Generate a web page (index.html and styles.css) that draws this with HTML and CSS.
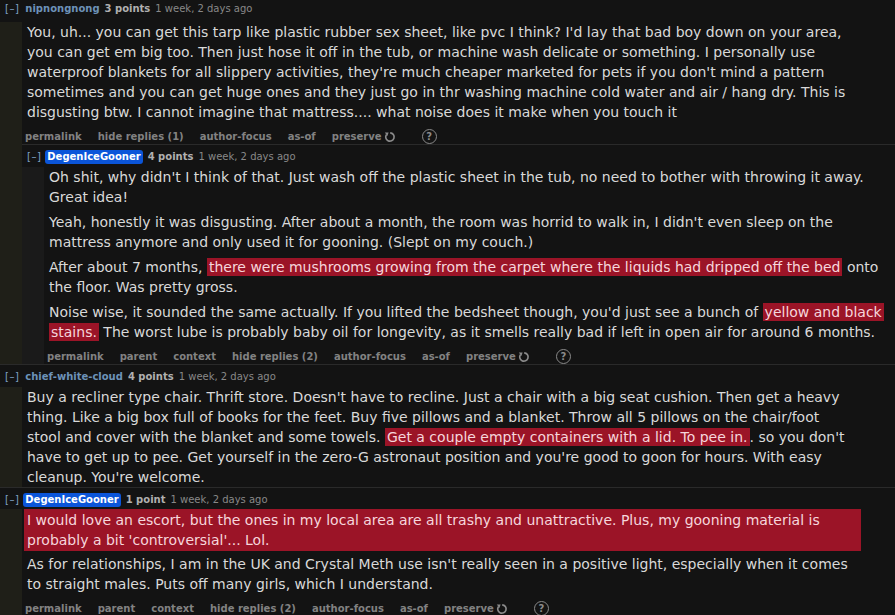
FILE: index.html
```html
<!DOCTYPE html>
<html lang="en">
<head>
    <meta charset="UTF-8">
    <meta name="viewport" content="width=device-width, initial-scale=1.0">
    <title>Comments</title>
    <link rel="stylesheet" href="styles.css">
</head>
<body>
    <div class="thread">
        <!-- top level comment -->
        <div class="comment">
            <p class="tagline">
                <a class="expand">[–]</a>
                <a class="author">nipnongnong</a>
                <span class="score">3 points</span>
                <time>1 week, 2 days ago</time>
            </p>
            <div class="body">
                <div class="md">
                    <p>You, uh... you can get this tarp like plastic rubber sex sheet, like pvc I think? I'd lay that bad boy down on your area, you can get em big too. Then just hose it off in the tub, or machine wash delicate or something. I personally use waterproof blankets for all slippery activities, they're much cheaper marketed for pets if you don't mind a pattern sometimes and you can get huge ones and they just go in thr washing machine cold water and air / hang dry. This is disgusting btw. I cannot imagine that mattress.... what noise does it make when you touch it</p>
                </div>
                <ul class="flat-list">
                    <li>permalink</li>
                    <li>hide replies (1)</li>
                    <li>author-focus</li>
                    <li>as-of</li>
                    <li class="preserve">preserve
                        <svg viewBox="0 0 12 12" width="12" height="12"><path d="M2.6 3.4 A4.2 4.2 0 1 0 6.2 1.8" fill="none" stroke="#8a8a8a" stroke-width="1.7"/><path d="M0.8 1.6 L4.6 1.4 L3.4 5 Z" fill="#8a8a8a"/></svg>
                    </li>
                    <li class="help"><span>?</span></li>
                </ul>

                <!-- reply -->
                <div class="comment child">
                    <p class="tagline">
                        <a class="expand">[–]</a>
                        <a class="author submitter">DegenIceGooner</a>
                        <span class="score">4 points</span>
                        <time>1 week, 2 days ago</time>
                    </p>
                    <div class="body nested">
                        <div class="md">
                            <p>Oh shit, why didn't I think of that. Just wash off the plastic sheet in the tub, no need to bother with throwing it away. Great idea!</p>
                            <p>Yeah, honestly it was disgusting. After about a month, the room was horrid to walk in, I didn't even sleep on the mattress anymore and only used it for gooning. (Slept on my couch.)</p>
                            <p>After about 7 months, <span class="hl">there were mushrooms growing from the carpet where the liquids had dripped off the bed</span> onto the floor. Was pretty gross.</p>
                            <p>Noise wise, it sounded the same actually. If you lifted the bedsheet though, you'd just see a bunch of <span class="hl">yellow and black stains.</span> The worst lube is probably baby oil for longevity, as it smells really bad if left in open air for around 6 months.</p>
                        </div>
                        <ul class="flat-list">
                            <li>permalink</li>
                            <li>parent</li>
                            <li>context</li>
                            <li>hide replies (2)</li>
                            <li>author-focus</li>
                            <li>as-of</li>
                            <li class="preserve">preserve
                                <svg viewBox="0 0 12 12" width="12" height="12"><path d="M2.6 3.4 A4.2 4.2 0 1 0 6.2 1.8" fill="none" stroke="#8a8a8a" stroke-width="1.7"/><path d="M0.8 1.6 L4.6 1.4 L3.4 5 Z" fill="#8a8a8a"/></svg>
                            </li>
                            <li class="help"><span>?</span></li>
                        </ul>
                    </div>
                </div>
            </div>
        </div>

        <div class="comment">
            <p class="tagline">
                <a class="expand">[–]</a>
                <a class="author">chief-white-cloud</a>
                <span class="score">4 points</span>
                <time>1 week, 2 days ago</time>
            </p>
            <div class="body">
                <div class="md">
                    <p>Buy a recliner type chair. Thrift store. Doesn't have to recline. Just a chair with a big seat cushion. Then get a heavy thing. Like a big box full of books for the feet. Buy five pillows and a blanket. Throw all 5 pillows on the chair/foot stool and cover with the blanket and some towels. <span class="hl">Get a couple empty containers with a lid. To pee in.</span>. so you don't have to get up to pee. Get yourself in the zero-G astronaut position and you're good to goon for hours. With easy cleanup. You're welcome.</p>
                </div>
            </div>
        </div>

        <div class="comment">
            <p class="tagline">
                <a class="expand">[–]</a>
                <a class="author submitter">DegenIceGooner</a>
                <span class="score">1 point</span>
                <time>1 week, 2 days ago</time>
            </p>
            <div class="body">
                <div class="md">
                    <p class="hl-block">I would love an escort, but the ones in my local area are all trashy and unattractive. Plus, my gooning material is probably a bit 'controversial'... Lol.</p>
                    <p>As for relationships, I am in the UK and Crystal Meth use isn't really seen in a positive light, especially when it comes to straight males. Puts off many girls, which I understand.</p>
                </div>
                <ul class="flat-list">
                    <li>permalink</li>
                    <li>parent</li>
                    <li>context</li>
                    <li>hide replies (2)</li>
                    <li>author-focus</li>
                    <li>as-of</li>
                    <li class="preserve">preserve
                        <svg viewBox="0 0 12 12" width="12" height="12"><path d="M2.6 3.4 A4.2 4.2 0 1 0 6.2 1.8" fill="none" stroke="#8a8a8a" stroke-width="1.7"/><path d="M0.8 1.6 L4.6 1.4 L3.4 5 Z" fill="#8a8a8a"/></svg>
                    </li>
                    <li class="help"><span>?</span></li>
                </ul>
            </div>
        </div>
    </div>
</body>
</html>
```

FILE: styles.css
```css
* {
    margin: 0;
    padding: 0;
    box-sizing: border-box;
}

body {
    font-family: 'DejaVu Sans', Verdana, sans-serif;
    background: #131313;
    color: #d9d9d9;
    overflow: hidden;
}

.thread {
    width: 895px;
}

.comment {
    border-top: 1px solid #2a2a2a;
    padding-top: 5px;
}

.thread > .comment:first-child {
    border-top: none;
    padding-top: 2px;
}

.tagline {
    display: flex;
    align-items: baseline;
    gap: 5px;
    font-size: 10px;
    line-height: 14px;
    padding-left: 5px;
    color: #888;
}

.expand {
    color: #7fa1c4;
    letter-spacing: 0.5px;
    margin-right: 1px;
}

.author {
    color: #6d92b8;
    font-weight: bold;
}

.author.submitter {
    background: #0b55d9;
    color: #fff;
    border-radius: 3px;
    padding: 0 2px;
    margin-left: -2px;
}

.score {
    color: #b0b0b0;
    font-weight: bold;
}

.body {
    border-left: 22px solid #1f1f18;
}

.body.nested {
    border-left-color: #1a1a1a;
}

.md {
    max-width: 833px;
    padding-left: 5px;
    margin-top: 3px;
    font-size: 14px;
    line-height: 20px;
}

.nested .md {
    max-width: 845px;
}

.thread > .comment:first-child > .body > .md {
    margin-top: 6px;
}

.md p {
    margin-bottom: 5px;
}

.md p:last-child {
    margin-bottom: 0;
}

.hl {
    background: #9b1427;
    color: #f6d6dc;
    padding: 1px 2px;
    -webkit-box-decoration-break: clone;
    box-decoration-break: clone;
}

.md p.hl-block {
    background: #9b1427;
    color: #f6d6dc;
    margin: -1px -6px 3px -3px;
    padding: 1px 3px;
}

.flat-list {
    list-style: none;
    display: flex;
    align-items: center;
    gap: 16px;
    margin-top: 7px;
    padding-left: 3px;
    font-size: 10px;
    font-weight: bold;
    line-height: 14px;
    color: #828282;
}

.flat-list .preserve {
    display: flex;
    align-items: center;
    gap: 2px;
}

.flat-list .help {
    margin-left: 10px;
}

.help span {
    display: flex;
    align-items: center;
    justify-content: center;
    width: 15px;
    height: 15px;
    border: 1.5px solid #8a8a8a;
    border-radius: 50%;
    font-size: 10px;
    color: #8a8a8a;
}
```
